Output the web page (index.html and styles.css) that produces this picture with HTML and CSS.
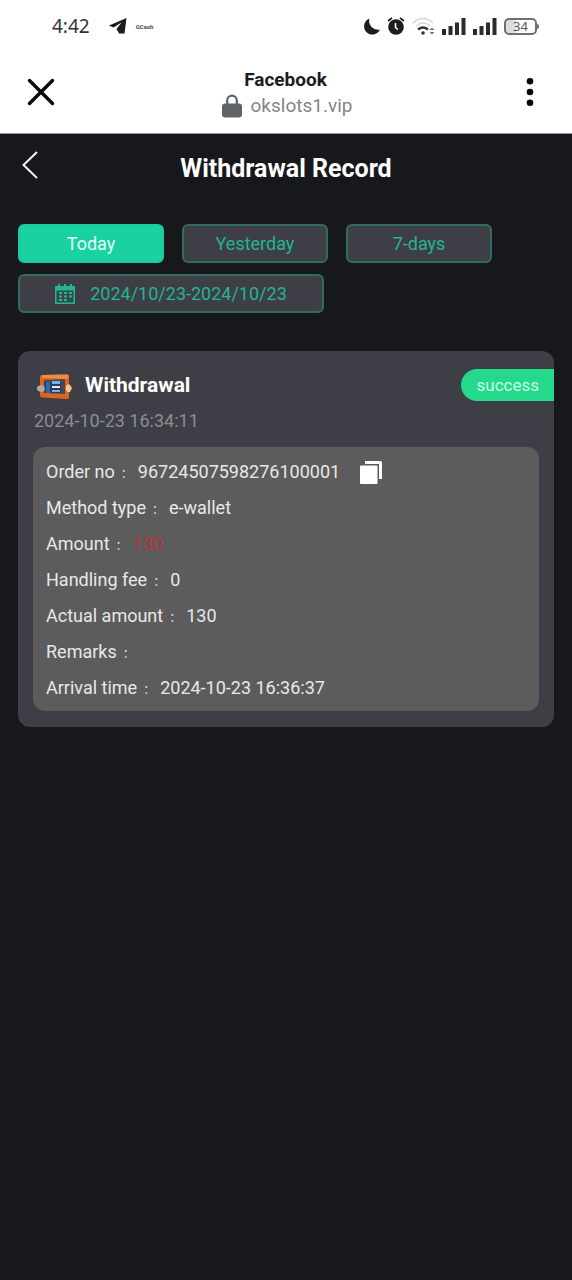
FILE: index.html
```html
<!DOCTYPE html>
<html lang="en">
<head>
<meta charset="utf-8">
<meta name="viewport" content="width=device-width, initial-scale=1">
<title>Withdrawal Record</title>
<link rel="stylesheet" href="styles.css">
</head>
<body>
<div class="status-bar">
  <div class="status-left">
    <span class="clock">4:42</span>
    <svg width="18" height="16" viewBox="0 0 18 16" aria-hidden="true"><path d="M0 7.500 17.500 0 15.500 15.500 10 15.500 7.500 11 12.500 4.500 4.500 9.500Z" fill="#1d1d1d"/></svg>
    <span class="gcash">GCash</span>
  </div>
  <div class="status-right">
    <svg width="16" height="17" viewBox="0 0 16 17" aria-hidden="true"><path d="M5.500 0.500A8.300 8.300 0 1 0 16 11.500Q11 12.500 7.500 9Q4 5.500 5.500 0.500Z" fill="#1d1d1d"/></svg>
    <svg width="18" height="18" viewBox="0 0 18 18" aria-hidden="true"><circle cx="9" cy="10" r="7.800" fill="#1d1d1d"/><path d="M1 4 5 1M17 4 13 1" stroke="#1d1d1d" stroke-width="1.600" fill="none"/><path d="M8.500 6v4.500l2.500 2" stroke="#fff" stroke-width="1.600" fill="none"/></svg>
    <svg width="23" height="18" viewBox="0 0 23 18" fill="none" aria-hidden="true"><path d="M1 6Q11 -3 21 6M4 9Q11 2.500 18 9" stroke="#dcdcdc" stroke-width="2"/><path d="M6 12.500Q11 8.500 16 12.500" stroke="#333" stroke-width="2.300"/><circle cx="11" cy="16" r="1.800" fill="#333"/><path d="M17.500 13 20 10.500l2.500 2.500ZM17.500 15h5L20 17.500Z" fill="#777"/></svg>
    <svg width="24" height="17" viewBox="0 0 24 17" fill="#2b2b2b" aria-hidden="true"><path d="M0 11h4v6H0zM6.500 8h4v9h-4zM13 4.500h4V17h-4zM19.500 0h4v17h-4z"/></svg>
    <svg width="24" height="17" viewBox="0 0 24 17" fill="#2b2b2b" aria-hidden="true"><path d="M0 11h4v6H0zM6.500 8h4v9h-4zM13 4.500h4V17h-4zM19.500 0h4v17h-4z"/></svg>
    <span class="battery">34</span>
  </div>
</div>
<header class="browser-bar">
  <button class="icon-button" aria-label="Close"><svg width="28" height="28" viewBox="0 0 28 28"><path d="M2.500 2.500 25.500 25.500M25.500 2.500 2.500 25.500" stroke="#080808" stroke-width="3.400" stroke-linecap="round"/></svg></button>
  <div class="site">
    <div class="site-name">Facebook</div>
    <div class="site-url">
      <svg width="20" height="24" viewBox="0 0 20 24" aria-hidden="true"><path d="M5.200 11V6.500a4.800 4.800 0 0 1 9.600 0V11" fill="none" stroke="#606366" stroke-width="2.200"/><rect y="9.500" width="20" height="14" rx="3" fill="#606366"/></svg>
      <span>okslots1.vip</span>
    </div>
  </div>
  <button class="icon-button" aria-label="More options"><svg width="28" height="28" viewBox="0 0 28 28" fill="#080808"><circle cx="14" cy="3.300" r="3.300"/><circle cx="14" cy="14" r="3.300"/><circle cx="14" cy="24.700" r="3.300"/></svg></button>
</header>
<main class="page">
  <div class="title-bar">
    <button class="back" aria-label="Back"><svg width="16" height="28" viewBox="0 0 16 28"><path d="M15 1 1.500 14 15 27" fill="none" stroke="#f4f4f4" stroke-width="2"/></svg></button>
    <h1>Withdrawal Record</h1>
  </div>
  <div class="filters">
    <button class="filter active">Today</button>
    <button class="filter">Yesterday</button>
    <button class="filter">7-days</button>
    <button class="filter range">
      <svg width="20" height="20" viewBox="0 0 20 20" aria-hidden="true"><path d="M0 2h3V0h2v2h4V0h2v2h4V0h2v2h3v18H0Z" fill="#23b58f"/><path d="M1.500 6.500h17v12h-17Z" fill="#3a4648"/><path d="M4 8h3v2H4zM9 8h3v2H9zM14 8h3v2h-3zM4 11.500h3v2H4zM9 11.500h3v2H9zM14 11.500h3v2h-3zM4 15h3v2H4zM9 15h3v2H9z" fill="#23b58f"/></svg>
      <span>2024/10/23-2024/10/23</span>
    </button>
  </div>
  <article class="card">
    <div class="card-head">
      <svg width="36" height="26" viewBox="0 0 36 26" aria-hidden="true"><path d="M3 3Q3 1 5 1L30 0.500Q32 0.500 32 3V23Q32 25.500 30 25L5 23.500Q3 23.500 3 21Z" fill="#d9651f"/><path d="M5 1 30 0.500Q32 0.500 32 3L30 5 5 4Z" fill="#f08a42"/><path d="M7 6 28 5V20L7 19Z" fill="#4b4650"/><path d="M8 8h16v11H8Z" fill="#263b67"/><path d="M9 8h4v11H9Z" fill="#2f6aa8"/><path d="M15 7h8v3h-8zM15 16h8v2h-8z" fill="#65b8df"/><path d="M15 12h8v2h-8z" fill="#f2ead0"/><path d="M0 13Q3 10 7 12L8 16 5 18Q2 18 0 16Z" fill="#b5a7a5"/><path d="M29 12Q31 9 33 11L35 14 33 18 30 18Q28 15 29 12Z" fill="#f0c68d"/></svg>
      <h2>Withdrawal</h2>
      <span class="badge">success</span>
    </div>
    <time class="created">2024-10-23 16:34:11</time>
    <dl class="details">
      <div class="row"><dt>Order no<span class="colon">：</span></dt><dd>96724507598276100001</dd>
        <dd class="copy-cell"><button class="copy" aria-label="Copy order number"><svg width="22" height="23" viewBox="0 0 22 23" fill="#fff"><path d="M5 0h15.500Q22 0 22 1.500V18h-3V3H5Z"/><rect y="4.500" width="17.500" height="18.500" rx="1"/></svg></button></dd></div>
      <div class="row"><dt>Method type<span class="colon">：</span></dt><dd>e-wallet</dd></div>
      <div class="row"><dt>Amount<span class="colon">：</span></dt><dd class="amount">130</dd></div>
      <div class="row"><dt>Handling fee<span class="colon">：</span></dt><dd>0</dd></div>
      <div class="row"><dt>Actual amount<span class="colon">：</span></dt><dd>130</dd></div>
      <div class="row"><dt>Remarks<span class="colon">：</span></dt><dd></dd></div>
      <div class="row"><dt>Arrival time<span class="colon">：</span></dt><dd>2024-10-23 16:36:37</dd></div>
    </dl>
  </article>
</main>
</body>
</html>
```
FILE: styles.css
```css
* { box-sizing: border-box; }
body {
  margin: 0;
  min-height: 100vh;
  display: flex;
  flex-direction: column;
  background: #fff;
  font-family: Roboto, "Noto Sans CJK SC", sans-serif;
  font-size: 18px;
}
button {
  font: inherit;
  padding: 0;
  border: 0;
  background: none;
  cursor: pointer;
}
svg { display: block; flex: none; }
h1, h2, dl, dd { margin: 0; }

.status-bar {
  display: flex;
  justify-content: space-between;
  align-items: center;
  height: 52px;
  padding: 0 32px 0 52px;
}
.status-left { display: flex; align-items: center; gap: 9px; }
.clock {
  font: 19px "Noto Sans", sans-serif;
  color: #333;
  margin-right: 10px;
}
.gcash { font-size: 6px; font-weight: 700; color: #444; }
.status-right { display: flex; align-items: center; gap: 7px; }
.battery {
  position: relative;
  width: 33px;
  height: 17px;
  margin-right: 3px;
  border: 2px solid #707070;
  border-radius: 5px;
  background: linear-gradient(90deg, #ddd 34%, #fff 34%);
  font: 13px/13px "Noto Sans", sans-serif;
  text-align: center;
  color: #555;
}
.battery::after {
  content: "";
  position: absolute;
  left: 100%;
  top: 4px;
  width: 3px;
  height: 5px;
  margin-left: 1px;
  border-radius: 0 2px 2px 0;
  background: #707070;
}

.browser-bar {
  display: flex;
  justify-content: space-between;
  align-items: center;
  height: 82px;
  padding: 0 28px 2px 27px;
  border-bottom: 1px solid #999;
}
.site { padding-top: 3px; text-align: center; }
.site-name { font-size: 19px; font-weight: 700; line-height: 26px; color: #1c1c1c; }
.site-url {
  display: flex;
  align-items: center;
  gap: 9px;
  padding-left: 3px;
  font-size: 19px;
  line-height: 26px;
  color: #858585;
}

.page {
  flex: 1;
  padding: 0 18px;
  background: #17181c;
}
.title-bar {
  display: grid;
  grid-template-columns: 24px 1fr 24px;
  align-items: center;
  height: 70px;
}
.back { padding: 0 0 8px 4px; }
.title-bar h1 {
  font-size: 25px;
  line-height: 32px;
  font-weight: 700;
  text-align: center;
  color: #fff;
}

.filters {
  display: flex;
  flex-wrap: wrap;
  gap: 11px 18px;
  padding-top: 20px;
}
.filter {
  width: 146px;
  height: 39px;
  border: 2px solid #336a5e;
  border-radius: 6px;
  background: #3e3e47;
  line-height: 32px;
  color: #23b58f;
}
.filter.active {
  border-color: #1acb9d;
  background: #19d1a1;
  color: #e8fff8;
}
.filter.range {
  display: flex;
  justify-content: center;
  align-items: center;
  gap: 15px;
  width: 306px;
}

.card {
  margin-top: 38px;
  padding: 18px 15px 16px;
  border-radius: 12px;
  background: #3d3e46;
}
.card-head {
  display: flex;
  align-items: center;
  height: 32px;
  padding-left: 4px;
}
.card-head > svg { margin-top: 4px; }
.card-head h2 {
  margin-left: 12px;
  font-size: 21px;
  line-height: 34px;
  font-weight: 700;
  color: #fff;
}
.badge {
  margin: 0 -15px 0 auto;
  padding: 0 15px;
  border-radius: 16px 0 0 16px;
  background: #24d98b;
  font-size: 17px;
  line-height: 32px;
  color: #c9ffe3;
}
.created {
  display: block;
  padding: 8px 0 14px 1px;
  line-height: 24px;
  color: #8c8d91;
}
.details {
  padding: 7px 13px 5px;
  border-radius: 12px;
  background: #5c5c5c;
  color: #e8e8e8;
}
.row {
  display: flex;
  align-items: center;
  height: 36px;
  line-height: 36px;
}
.colon {
  margin: 0 5px 0 6px;
  font-size: 12px;
  line-height: 1;
}
.row .amount { color: #c32f30; }
.copy-cell { margin-left: 20px; }
.copy { display: block; }
```
